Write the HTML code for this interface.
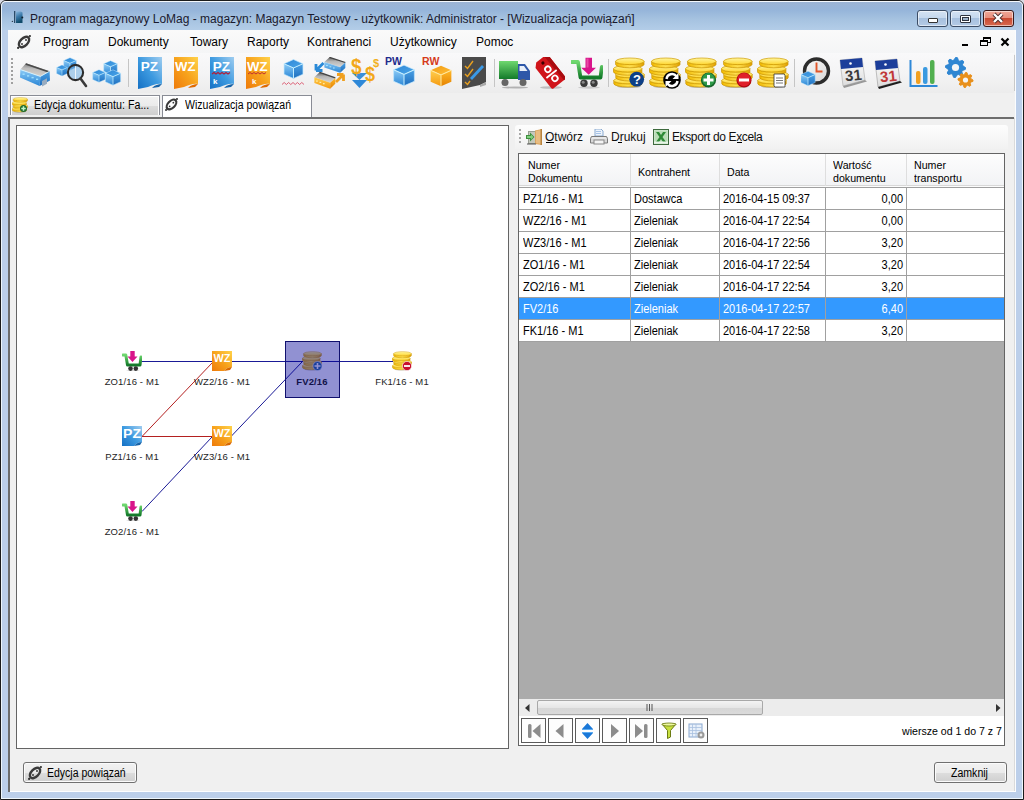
<!DOCTYPE html>
<html><head><meta charset="utf-8">
<style>
*{box-sizing:border-box;margin:0;padding:0}
html,body{width:1024px;height:800px;overflow:hidden;background:#d8dae4}
body{position:relative;font-family:"Liberation Sans",sans-serif;color:#000}
.a{position:absolute}
svg{display:block}
#win{left:0;top:0;width:1024px;height:800px;background:#bccfea;border:1px solid #1b1b1b;border-radius:6px 6px 0 0;box-shadow:inset 0 0 0 1px #eef6fc}
#titlebg{left:1px;top:1px;width:1022px;height:29px;border-radius:5px 5px 0 0;border-top:1px solid #f4f8fc;border-left:1px solid #eaf2fa;border-right:1px solid #eaf2fa;background:linear-gradient(#9cb4d4 0,#96b5da 30%,#a5c2e0 60%,#b3cde8 100%)}
#client{left:8px;top:30px;width:1008px;height:762px;background:#f0f0f0}
.t{white-space:nowrap;font-size:12px;line-height:14px}
.s{white-space:nowrap;font-size:11px;line-height:13px}
.hd{font-size:11.5px;line-height:13px;transform:scaleX(.925);transform-origin:0 0}
.gl{font-size:9.5px;letter-spacing:.12px;line-height:11px;text-align:center;white-space:nowrap;color:#1e1e1e}
.rc{font-size:12px;line-height:14px;transform:scaleX(.917);transform-origin:0 0}
.rr{transform-origin:100% 0}
.cap{top:10px;width:31px;height:17px;border:1px solid #3c4d66;border-radius:3px;box-shadow:inset 0 0 0 1px rgba(255,255,255,.55)}
</style></head><body>
<svg width="0" height="0" style="position:absolute">
<defs>
<linearGradient id="gBlue" x1="1" y1="0" x2="0" y2="1"><stop offset="0" stop-color="#9fcdf0"/><stop offset="0.5" stop-color="#3d9ae0"/><stop offset="1" stop-color="#1470c4"/></linearGradient>
<linearGradient id="gOrange" x1="1" y1="0" x2="0" y2="1"><stop offset="0" stop-color="#ffd24a"/><stop offset="0.5" stop-color="#f7a21c"/><stop offset="1" stop-color="#ee7a0a"/></linearGradient>
<linearGradient id="gCoin" x1="0" y1="0" x2="0" y2="1"><stop offset="0" stop-color="#fff7a0"/><stop offset="1" stop-color="#ffd632"/></linearGradient><linearGradient id="gCoinS" x1="0" y1="0" x2="1" y2="0"><stop offset="0" stop-color="#f0b800"/><stop offset="0.5" stop-color="#ffe050"/><stop offset="1" stop-color="#e0a000"/></linearGradient>
<linearGradient id="gGreen" x1="0" y1="0" x2="0" y2="1"><stop offset="0" stop-color="#6fd86f"/><stop offset="1" stop-color="#137a2a"/></linearGradient>
<symbol id="docPZ" viewBox="0 0 24 32"><path d="M0 0h24v27c-4-1-9 1-14 3L0 32z" fill="url(#gBlue)"/><path d="M14 31c3-3 6-4 10-4l-3 3z" fill="#1763a8"/><text x="11.5" y="13.5" font-family="Liberation Sans" font-weight="700" font-size="13.5" fill="#fff" text-anchor="middle">PZ</text></symbol>
<symbol id="docWZ" viewBox="0 0 24 32"><path d="M0 0h24v27c-4-1-9 1-14 3L0 32z" fill="url(#gOrange)"/><path d="M14 31c3-3 6-4 10-4l-3 3z" fill="#e06a00"/><text x="11.3" y="13.5" font-family="Liberation Sans" font-weight="700" font-size="13.5" fill="#fff" text-anchor="middle" textLength="20.5" lengthAdjust="spacingAndGlyphs">WZ</text></symbol>
<symbol id="gWZ" viewBox="0 0 20 20"><path d="M0 0h20v16c-3 0-6 1.5-8 4H0z" fill="url(#gOrange)"/><path d="M12 20c2-2.5 5-4 8-4l-2 3z" fill="#d86800"/><text x="10" y="11" font-family="Liberation Sans" font-weight="700" font-size="11.5" fill="#fff" text-anchor="middle" textLength="17" lengthAdjust="spacingAndGlyphs">WZ</text></symbol><symbol id="gPZ" viewBox="0 0 20 20"><path d="M0 0h20v16c-3 0-6 1.5-8 4H0z" fill="url(#gBlue)"/><path d="M12 20c2-2.5 5-4 8-4l-2 3z" fill="#1763a8"/><text x="10" y="11.5" font-family="Liberation Sans" font-weight="700" font-size="13" fill="#fff" text-anchor="middle" textLength="18" lengthAdjust="spacingAndGlyphs">PZ</text></symbol>
<symbol id="link" viewBox="0 0 14 14"><ellipse cx="7" cy="7" rx="6.3" ry="3.7" transform="rotate(-45 7 7)" fill="none" stroke="#3a3a3a" stroke-width="2.4"/><circle cx="12.9" cy="1.1" r="1.1" fill="#333"/><circle cx="1.1" cy="12.9" r="1.1" fill="#333"/><circle cx="9" cy="5" r=".95" fill="#333"/><circle cx="5" cy="9" r=".95" fill="#333"/></symbol>
<symbol id="cartS" viewBox="0 0 20 20"><path d="M0.8 4h3l1.7 10h12.5l1-8" fill="none" stroke="url(#gGreen)" stroke-width="3" stroke-linejoin="round" stroke-linecap="round"/><path d="M8.3 0h4.4v5.5h2.8l-5 5.5-5-5.5h2.8z" fill="#d8148a"/><circle cx="8.5" cy="17.6" r="2.3" fill="#333"/><circle cx="13.8" cy="17.6" r="2.3" fill="#333"/><ellipse cx="11" cy="19.6" rx="7" ry=".6" fill="#000" opacity=".15"/></symbol>
<symbol id="cart" viewBox="0 0 32 32"><ellipse cx="18" cy="30.5" rx="11" ry="1.2" fill="#000" opacity=".15"/><path d="M0.5 5h6.5l2.5 15.5h20l1.3-10.5" fill="none" stroke="url(#gGreen)" stroke-width="3.8" stroke-linejoin="round" stroke-linecap="round"/><path d="M14.5 0.7h6.5v10h4l-7.3 7-7.5-7h4.3z" fill="#d8148a"/><path d="M15.5 1.5h2v9h-2z" fill="#f060b0" opacity=".7"/><circle cx="13" cy="26.3" r="3.7" fill="#3a3a3a"/><circle cx="23" cy="26.3" r="3.7" fill="#3a3a3a"/><circle cx="12.2" cy="25.3" r="1.5" fill="#888"/><circle cx="22.2" cy="25.3" r="1.5" fill="#888"/></symbol>
<symbol id="coins" viewBox="0 0 32 32"><ellipse cx="16" cy="29.5" rx="12" ry="1.6" fill="#000" opacity=".2"/><path d="M0.8000000000000007 23.5A14.2 3.3 0 0 0 29.2 23.5V26.7A14.2 3.3 0 0 1 0.8000000000000007 26.7Z" fill="url(#gCoinS)" stroke="#c89200" stroke-width=".7"/><ellipse cx="15" cy="23.5" rx="14.2" ry="3.3" fill="url(#gCoin)" stroke="#d09c00" stroke-width=".7"/><path d="M2.8000000000000007 17.5A14.2 3.3 0 0 0 31.2 17.5V20.7A14.2 3.3 0 0 1 2.8000000000000007 20.7Z" fill="url(#gCoinS)" stroke="#c89200" stroke-width=".7"/><ellipse cx="17" cy="17.5" rx="14.2" ry="3.3" fill="url(#gCoin)" stroke="#d09c00" stroke-width=".7"/><path d="M0.5 11.7A14.2 3.3 0 0 0 28.9 11.7V14.899999999999999A14.2 3.3 0 0 1 0.5 14.899999999999999Z" fill="url(#gCoinS)" stroke="#c89200" stroke-width=".7"/><ellipse cx="14.7" cy="11.7" rx="14.2" ry="3.3" fill="url(#gCoin)" stroke="#d09c00" stroke-width=".7"/><path d="M2.6000000000000014 4.3A14.2 3.3 0 0 0 31.0 4.3V7.5A14.2 3.3 0 0 1 2.6000000000000014 7.5Z" fill="url(#gCoinS)" stroke="#c89200" stroke-width=".7"/><ellipse cx="16.8" cy="4.3" rx="14.2" ry="3.3" fill="url(#gCoin)" stroke="#d09c00" stroke-width=".7"/></symbol>
</defs></svg>

<div id="win" class="a"></div>
<div id="titlebg" class="a"></div>
<!-- title icon -->
<svg class="a" style="left:11px;top:10px" width="14" height="14" viewBox="0 0 14 14"><defs><linearGradient id="tiG" x1="0" y1="0" x2="0.3" y2="1"><stop offset="0" stop-color="#8ab8e0"/><stop offset=".5" stop-color="#3a78a8"/><stop offset="1" stop-color="#0e4a6a"/></linearGradient></defs><rect x="3" y="1" width="1.3" height="12" fill="#2a4a68"/><path d="M5 1.5h5l1.5 1v10.5H5z" fill="url(#tiG)"/><circle cx="11.3" cy="7.6" r="1" fill="#102030"/><circle cx="1.4" cy="11.4" r=".7" fill="#304050"/></svg>
<div class="a t" style="left:30px;top:12px;color:#1a1a2e">Program magazynowy LoMag - magazyn: Magazyn Testowy - użytkownik: Administrator - [Wizualizacja powiązań]</div>
<!-- caption buttons -->
<div class="a cap" style="left:917px;background:linear-gradient(#d4e2f2 0,#c5d8ee 45%,#a7c0de 50%,#b4cbe6 100%)"></div>
<div class="a" style="left:928px;top:18px;width:10px;height:5px;border:1px solid #333;background:#fff;border-radius:1px"></div>
<div class="a cap" style="left:950px;background:linear-gradient(#d4e2f2 0,#c5d8ee 45%,#a7c0de 50%,#b4cbe6 100%)"></div>
<div class="a" style="left:960px;top:15px;width:11px;height:8px;border:1px solid #2e3440;background:#fff;border-radius:1px"></div><div class="a" style="left:962px;top:17px;width:7px;height:4px;border:1px solid #2e3440;background:#9fb4cc"></div>
<div class="a cap" style="left:983px;border-color:#3a1a1a;background:linear-gradient(#f0a898 0,#e8907e 45%,#c94a32 50%,#d86a50 100%)"></div>
<div class="a" style="left:991px;top:12px"><svg width="14" height="12"><path d="M3 2L11 10M11 2L3 10" stroke="#4a2a2a" stroke-width="4"/><path d="M3 2L11 10M11 2L3 10" stroke="#fff" stroke-width="2.4"/></svg></div>

<div id="client" class="a"></div>

<!-- menubar -->
<div class="a" style="left:8px;top:30px;width:1008px;height:24px;background:linear-gradient(#fafafa,#f4f5f6)"></div>
<svg class="a" style="left:17px;top:35px" width="14" height="14"><use href="#link"/></svg>
<div class="a t" style="left:43px;top:35px">Program</div>
<div class="a t" style="left:108px;top:35px">Dokumenty</div>
<div class="a t" style="left:190px;top:35px">Towary</div>
<div class="a t" style="left:247px;top:35px">Raporty</div>
<div class="a t" style="left:307px;top:35px">Kontrahenci</div>
<div class="a t" style="left:390px;top:35px">Użytkownicy</div>
<div class="a t" style="left:476px;top:35px">Pomoc</div>
<!-- mdi buttons -->
<div class="a" style="left:962px;top:44px;width:6px;height:2px;background:#000"></div>
<div class="a" style="left:983px;top:37px;width:8px;height:6px;border:1px solid #000;border-top-width:2px"></div>
<div class="a" style="left:980px;top:40px;width:8px;height:6px;border:1px solid #000;border-top-width:2px;background:#f5f6f8"></div>
<div class="a" style="left:1000px;top:37px"><svg width="10" height="10"><path d="M1.5 1.5L8.5 8.5M8.5 1.5L1.5 8.5" stroke="#000" stroke-width="2.2"/></svg></div>

<!-- toolbar -->
<div class="a" style="left:8px;top:53px;width:1006px;height:40px;background:linear-gradient(#f9f9fa,#f4f4f5 50%,#ececec)"></div><div class="a" style="left:1014px;top:55px;width:1px;height:36px;background:#c8c8c8"></div>
<div class="a" style="left:11px;top:58px;width:2px;height:27px;background:repeating-linear-gradient(#a0a0a0 0 2px,transparent 2px 4px)"></div>
<div id="tb"></div><svg width="0" height="0" style="position:absolute"><defs>
<linearGradient id="cTop" x1="0" y1="0" x2="1" y2="1"><stop offset="0" stop-color="#2f86d4"/><stop offset="1" stop-color="#4aa6ea"/></linearGradient>
<linearGradient id="cL" x1="0" y1="0" x2="0" y2="1"><stop offset="0" stop-color="#8ccbf6"/><stop offset="1" stop-color="#2a86d6"/></linearGradient>
<linearGradient id="cR" x1="0" y1="0" x2="0" y2="1"><stop offset="0" stop-color="#4aa0e4"/><stop offset="1" stop-color="#1f6fbf"/></linearGradient>
<linearGradient id="oTop" x1="0" y1="0" x2="1" y2="1"><stop offset="0" stop-color="#f29a10"/><stop offset="1" stop-color="#ffbf3a"/></linearGradient>
<linearGradient id="oL" x1="0" y1="0" x2="0" y2="1"><stop offset="0" stop-color="#ffcf50"/><stop offset="1" stop-color="#f59a10"/></linearGradient>
<linearGradient id="oR" x1="0" y1="0" x2="0" y2="1"><stop offset="0" stop-color="#ffb82a"/><stop offset="1" stop-color="#e58300"/></linearGradient>
<linearGradient id="roofW" x1="0.6" y1="0" x2="0.4" y2="1"><stop offset="0" stop-color="#6a6a6a"/><stop offset="0.45" stop-color="#bdbdbd"/><stop offset="1" stop-color="#d9d2ca"/></linearGradient>
<linearGradient id="roof" x1="0" y1="0" x2="0" y2="1"><stop offset="0" stop-color="#5a5a5a"/><stop offset="0.4" stop-color="#b5b5b5"/><stop offset="1" stop-color="#d8d8d8"/></linearGradient>
<symbol id="cubeB" viewBox="0 0 20 20"><path d="M10 1L19 5L10 9L1 5z" fill="url(#cTop)"/><path d="M1 5L10 9V19L1 15z" fill="url(#cL)"/><path d="M10 9L19 5V15L10 19z" fill="url(#cR)"/><path d="M1 5L10 9L19 5M10 9V19" stroke="#c8f0ff" stroke-width=".9" fill="none"/><path d="M10 1L19 5V15L10 19L1 15V5z" stroke="#bfe8ff" stroke-width=".6" fill="none"/></symbol>
<symbol id="cubeO" viewBox="0 0 20 20"><path d="M10 1L19 5L10 9L1 5z" fill="url(#oTop)"/><path d="M1 5L10 9V19L1 15z" fill="url(#oL)"/><path d="M10 9L19 5V15L10 19z" fill="url(#oR)"/><path d="M1 5L10 9L19 5M10 9V19" stroke="#ffe9a0" stroke-width=".9" fill="none"/></symbol>
<symbol id="house" viewBox="0 0 32 26"><path d="M0.4 8.6L6 2.2L29.6 10.2L20.4 15.4z" fill="url(#roofW)"/><path d="M6 2.2L29.6 10.2L28 11.5L5.5 3.8z" fill="#4a4a4a"/><path d="M0.4 8.6L20.4 15.4L19.6 25L0 16.6z" fill="url(#cL)"/><path d="M20.4 15.4L29.6 10.2L30 19.5L19.6 25z" fill="url(#cR)"/><path d="M0.4 8.6L20.4 15.4L29.6 10.2" stroke="#d8f4ff" stroke-width=".9" fill="none"/><g fill="#9fe0ff"><rect x="2.5" y="12.5" width="2.2" height="1.4"/><rect x="7" y="14.2" width="2.2" height="1.4"/><rect x="11.5" y="15.9" width="2.2" height="1.4"/><rect x="16" y="17.6" width="2.2" height="1.4"/></g><path d="M22 20l5-2.8v5.5l-5 2.8z" fill="#98acc0"/></symbol>
</defs></svg>
<!-- 1 warehouse -->
<svg class="a" style="left:20px;top:61px" width="32" height="26" viewBox="0 0 32 26"><use href="#house"/></svg>
<!-- 2 search -->
<svg class="a" style="left:56px;top:57px" width="32" height="32" viewBox="0 0 32 32"><use href="#cubeB" x="6" y="0" width="16" height="14"/><use href="#cubeB" x="0" y="7" width="12" height="13"/><circle cx="19.5" cy="15.5" r="7.6" fill="#7db7e6" opacity=".6"/><path d="M19.5 8.5v14" stroke="#fff" stroke-width=".8"/><circle cx="19.5" cy="15.5" r="7.6" fill="none" stroke="#2d2d2d" stroke-width="2.1"/><path d="M24.5 21.5L30 29" stroke="#3a3a3a" stroke-width="2.6" stroke-linecap="round"/></svg>
<!-- 3 boxes -->
<svg class="a" style="left:92px;top:60px" width="32" height="28" viewBox="0 0 32 28"><use href="#cubeB" x="10" y="0" width="17" height="15"/><use href="#cubeB" x="0" y="9" width="14" height="14"/><use href="#cubeB" x="12" y="9" width="18" height="17"/></svg>
<div class="a" style="left:128px;top:59px;width:1px;height:28px;background:#c5c5c5"></div>
<!-- 4 PZ -->
<svg class="a" style="left:138px;top:57px" width="24" height="32"><use href="#docPZ"/></svg>
<!-- 5 WZ -->
<svg class="a" style="left:174px;top:57px" width="24" height="32"><use href="#docWZ"/></svg>
<!-- 6 PZk -->
<svg class="a" style="left:210px;top:57px" width="24" height="32"><use href="#docPZ"/><path d="M2 17l2-1.5 2 1.5 2-1.5 2 1.5 2-1.5 2 1.5 2-1.5 2 1.5 2-1.5" stroke="#b0203a" stroke-width="1.2" fill="none"/><text x="3" y="27" font-family="Liberation Sans" font-weight="700" font-size="8" fill="#fff">k</text></svg>
<!-- 7 WZk -->
<svg class="a" style="left:246px;top:57px" width="24" height="32"><use href="#docWZ"/><path d="M2 17l2-1.5 2 1.5 2-1.5 2 1.5 2-1.5 2 1.5 2-1.5 2 1.5 2-1.5" stroke="#c03030" stroke-width="1" fill="none"/><text x="6" y="27" font-family="Liberation Sans" font-weight="700" font-size="8" fill="#fff">k</text></svg>
<!-- 8 cube wave -->
<svg class="a" style="left:282px;top:58px" width="24" height="30" viewBox="0 0 24 30"><use href="#cubeB" x="1" y="0" width="21" height="22"/><path d="M0 26.5l2.2-2 2.2 2 2.2-2 2.2 2 2.2-2 2.2 2 2.2-2 2.2 2 2.2-2 2.2 2" stroke="#d9506a" stroke-width="0.9" fill="none"/></svg>
<!-- 9 exchange -->
<svg class="a" style="left:313px;top:57px" width="34" height="32" viewBox="0 0 34 32"><svg x="11" y="0" width="22" height="16" viewBox="0 0 32 26" preserveAspectRatio="none"><path d="M0.5 8L8 0.5L31 9L23.5 16.5z" fill="url(#roof)"/><path d="M8 0.5L31 9" stroke="#444" stroke-width="2"/><path d="M0.5 8L23.5 16.5V25.5L0.5 17z" fill="url(#cL)"/><path d="M23.5 16.5L31 9V18L23.5 25.5z" fill="url(#cR)"/><g fill="#a8e4ff"><rect x="3" y="13" width="2.5" height="1.8"/><rect x="8" y="15" width="2.5" height="1.8"/><rect x="13" y="17" width="2.5" height="1.8"/></g></svg><svg x="1" y="15" width="22" height="17" viewBox="0 0 32 26" preserveAspectRatio="none"><path d="M0.5 8L8 0.5L31 9L23.5 16.5z" fill="url(#roof)"/><path d="M8 0.5L31 9" stroke="#444" stroke-width="2"/><path d="M0.5 8L23.5 16.5V25.5L0.5 17z" fill="url(#oL)"/><path d="M23.5 16.5L31 9V18L23.5 25.5z" fill="url(#oR)"/><g fill="#fff0b0"><rect x="3" y="13" width="2.5" height="1.8"/><rect x="8" y="15" width="2.5" height="1.8"/><rect x="13" y="17" width="2.5" height="1.8"/></g></svg><path d="M10.5 6L4 12.5M3 13.5h6.5M3 13.5V7" stroke="#2a8ad8" stroke-width="2.8" fill="none"/><path d="M23 25L29.5 18.5M30.5 17.5h-6.5M30.5 17.5v6.5" stroke="#f0a020" stroke-width="2.8" fill="none"/></svg>
<!-- 10 $$$ -->
<svg class="a" style="left:351px;top:57px" width="30" height="32" viewBox="0 0 30 32"><path d="M1 16h15l-7.5 7z" fill="#3a90d8"/><path d="M1 23h15l-7.5 8z" fill="#2e88d8"/><text x="0" y="15" font-family="Liberation Sans" font-weight="700" font-size="19" fill="#f2a81a" transform="scale(1,1.12)">$</text><text x="14" y="21.5" font-family="Liberation Sans" font-weight="700" font-size="18" fill="#f2a81a" transform="scale(1,1.12)">$</text><text x="22" y="9.5" font-family="Liberation Sans" font-weight="700" font-size="11" fill="#f2b020">$</text></svg>
<!-- 11 PW -->
<svg class="a" style="left:385px;top:57px" width="32" height="32" viewBox="0 0 32 32"><text x="0" y="7.5" font-family="Liberation Sans" font-weight="700" font-size="10.5" fill="#1e2c8c">PW</text><use href="#cubeB" x="7.5" y="7" width="23" height="23"/></svg>
<!-- 12 RW -->
<svg class="a" style="left:421px;top:57px" width="32" height="32" viewBox="0 0 32 32"><text x="1" y="7.5" font-family="Liberation Sans" font-weight="700" font-size="10.5" fill="#d63a1a">RW</text><use href="#cubeO" x="8.5" y="7.5" width="23" height="23"/></svg>
<!-- 13 checklist -->
<svg class="a" style="left:462px;top:57px" width="24" height="32" viewBox="0 0 24 32"><path d="M0 0h24v25l-6 3-18 4z" fill="#4a4a4a"/><path d="M18 28l6-3v3l-6 2z" fill="#aaa"/><path d="M3 9l2.5 2.5L11 4M3 17l2.5 2.5L11 12M3 25l2.5 2.5L8 24" stroke="#e8a020" stroke-width="1.4" fill="none"/><path d="M9 22L21 9" stroke="#3a9ae8" stroke-width="2.8"/></svg>
<div class="a" style="left:494px;top:59px;width:1px;height:28px;background:#c5c5c5"></div>
<!-- 14 truck -->
<svg class="a" style="left:499px;top:61px" width="32" height="28" viewBox="0 0 32 28"><rect x="0" y="0" width="19" height="18" fill="url(#gGreen)"/><path d="M19 3h7l5 7v9H19z" fill="#2e57a8"/><path d="M20.5 5h4.5l3.5 5h-8z" fill="#e8eef8"/><circle cx="6" cy="21.5" r="3.5" fill="#666"/><circle cx="24" cy="21.5" r="3.5" fill="#666"/><ellipse cx="16" cy="26.5" rx="13" ry="1" fill="#000" opacity=".25"/></svg>
<!-- 15 tag -->
<svg class="a" style="left:535px;top:57px" width="30" height="32" viewBox="0 0 30 32"><ellipse cx="16" cy="30.5" rx="11" ry="1.3" fill="#000" opacity=".2"/><g transform="rotate(-38 15 15)"><path d="M6 3l4-4h10l4 4v25a2 2 0 0 1-2 2H8a2 2 0 0 1-2-2z" fill="#d0141a"/><path d="M20 -1l4 4v25a2 2 0 0 1-2 2h-1z" fill="#a80c10"/><circle cx="15" cy="3.5" r="1.6" fill="#3a0000"/><circle cx="15" cy="11.5" r="2.8" fill="none" stroke="#fff" stroke-width="1.8"/><circle cx="15" cy="23" r="2.8" fill="none" stroke="#fff" stroke-width="1.8"/><path d="M8.5 17.5h13" stroke="#fff" stroke-width="1.8"/></g></svg>
<!-- 16 cart -->
<svg class="a" style="left:571px;top:57px" width="32" height="32"><use href="#cart"/></svg>
<div class="a" style="left:608px;top:59px;width:1px;height:28px;background:#c5c5c5"></div>
<!-- 17-21 coins -->
<svg class="a" style="left:613px;top:57px" width="32" height="32"><use href="#coins"/><circle cx="23.7" cy="22.2" r="7.4" fill="#0d3f86"/><text x="23.9" y="27" font-family="Liberation Sans" font-weight="700" font-size="13" fill="#fff" text-anchor="middle">?</text></svg>
<svg class="a" style="left:649px;top:57px" width="32" height="32"><use href="#coins"/><circle cx="23" cy="23" r="8.8" fill="#000"/><path d="M17.5 22a5.6 5.6 0 0 1 10-2.8M28.5 24a5.6 5.6 0 0 1-10 2.8" stroke="#fff" stroke-width="2.4" fill="none"/><path d="M29.5 16v6h-6zM16.5 30v-6h6z" fill="#fff"/></svg>
<svg class="a" style="left:685px;top:57px" width="32" height="32"><use href="#coins"/><circle cx="23.5" cy="23" r="7.6" fill="#16652a"/><circle cx="23.5" cy="22.5" r="6.4" fill="#2e9a48"/><path d="M23.5 18v10M18.5 23h10" stroke="#fff" stroke-width="3"/></svg>
<svg class="a" style="left:721px;top:57px" width="32" height="32"><use href="#coins"/><circle cx="23" cy="23" r="7.6" fill="#b00a14"/><circle cx="23" cy="22.6" r="6.6" fill="#e0202a"/><path d="M18 23h10" stroke="#fff" stroke-width="3"/></svg>
<svg class="a" style="left:757px;top:57px" width="32" height="32"><use href="#coins"/><path d="M17 17h10l1 1v12h-10l-1-1z" fill="#fff" stroke="#333" stroke-width=".8"/><path d="M19 21h7M19 23.5h7M19 26h7" stroke="#555" stroke-width=".8"/></svg>
<div class="a" style="left:794px;top:59px;width:1px;height:28px;background:#c5c5c5"></div>
<!-- 22 clock -->
<svg class="a" style="left:801px;top:57px" width="32" height="32" viewBox="0 0 32 32"><defs><linearGradient id="clkF" x1="0" y1="0" x2="1" y2="1"><stop offset="0" stop-color="#fafafa"/><stop offset="1" stop-color="#d6d6d6"/></linearGradient></defs><circle cx="15.5" cy="14" r="12" fill="url(#clkF)" stroke="#2c2c2c" stroke-width="3.4"/><path d="M15.5 5.5v9h6" stroke="#e0562a" stroke-width="1.9" fill="none"/><use href="#cubeB" x="-1" y="13" width="16" height="17"/></svg>
<!-- 23 cal1 -->
<svg class="a" style="left:838px;top:57px" width="32" height="32" viewBox="0 0 32 32"><defs><linearGradient id="calP" x1="0" y1="0" x2="0" y2="1"><stop offset="0" stop-color="#ffffff"/><stop offset="1" stop-color="#dcdcdc"/></linearGradient></defs><path d="M2 3l22-2 3 22-22 6z" fill="url(#calP)" stroke="#aaa" stroke-width=".6"/><path d="M2 3l22-2 1 9L3 12z" fill="#1c3e9a"/><circle cx="12.5" cy="6.5" r="1.3" fill="#fff"/><text x="7" y="23.5" font-family="Liberation Sans" font-weight="700" font-size="15" fill="#3a3a3a" transform="rotate(-6 15 18)">31</text><path d="M5 29l22-6 2 1.5L6 31z" fill="#999"/></svg>
<!-- 24 cal2 -->
<svg class="a" style="left:873px;top:57px" width="32" height="32" viewBox="0 0 32 32"><path d="M2 4l22-2 3 22-22 6z" fill="url(#calP)" stroke="#999" stroke-width=".6"/><path d="M2 4l22-2 1 9L3 13z" fill="#1c3e9a"/><circle cx="12.5" cy="7.5" r="1.3" fill="#fff"/><text x="7" y="24.5" font-family="Liberation Sans" font-weight="700" font-size="15" fill="#c03838" transform="rotate(-6 15 19)">31</text><path d="M5 30l22-6 2 1.5L6 32z" fill="#1e1e1e"/></svg>
<!-- 25 chart -->
<svg class="a" style="left:909px;top:57px" width="30" height="32" viewBox="0 0 30 32"><path d="M1.5 3v26h27" stroke="#2e88d8" stroke-width="2" fill="none"/><rect x="7" y="14" width="4.5" height="13" rx="2" fill="#f2a020"/><rect x="14" y="10" width="4.5" height="17" rx="2" fill="#3a9ae0"/><rect x="21" y="3" width="4.5" height="24" rx="2" fill="#52b050"/></svg>
<!-- 26 gears -->
<svg class="a" style="left:945px;top:57px" width="30" height="32" viewBox="0 0 30 32"><polygon points="10.50,0.50 12.45,0.69 13.41,3.48 14.72,4.18 17.57,3.43 18.81,4.94 17.52,7.59 17.95,9.02 20.50,10.50 20.31,12.45 17.52,13.41 16.82,14.72 17.57,17.57 16.06,18.81 13.41,17.52 11.98,17.95 10.50,20.50 8.55,20.31 7.59,17.52 6.28,16.82 3.43,17.57 2.19,16.06 3.48,13.41 3.05,11.98 0.50,10.50 0.69,8.55 3.48,7.59 4.18,6.28 3.43,3.43 4.94,2.19 7.59,3.48 9.02,3.05" fill="#2f86d2" stroke="#2f86d2" stroke-width="1" stroke-linejoin="round"/><circle cx="10.5" cy="10.5" r="3.6" fill="#f4f5f6"/><polygon points="20.50,15.50 21.96,15.64 22.64,17.83 23.61,18.34 25.80,17.70 26.74,18.83 25.67,20.86 25.99,21.91 28.00,23.00 27.86,24.46 25.67,25.14 25.16,26.11 25.80,28.30 24.67,29.24 22.64,28.17 21.59,28.49 20.50,30.50 19.04,30.36 18.36,28.17 17.39,27.66 15.20,28.30 14.26,27.17 15.33,25.14 15.01,24.09 13.00,23.00 13.14,21.54 15.33,20.86 15.84,19.89 15.20,17.70 16.33,16.76 18.36,17.83 19.41,17.51" fill="#e8901c" stroke="#e8901c" stroke-width="1" stroke-linejoin="round"/><circle cx="20.5" cy="23" r="2.6" fill="#f4f5f6"/></svg>


<!-- tabs -->
<div class="a" style="left:10px;top:95px;width:150px;height:20px;border:1px solid #898c95;border-bottom:none;box-shadow:inset 1px 1px 0 #fff,inset -1px 0 0 #fff;background:linear-gradient(#f2f2f2,#ebebeb 50%,#dddddd 51%,#cfcfcf)"></div>
<svg class="a" style="left:12px;top:97px" width="16" height="16" viewBox="0 0 32 32"><use href="#coins"/><circle cx="23" cy="23" r="7" fill="#1d6a30"/><path d="M23 18.5v9M18.5 23h9" stroke="#bff5c8" stroke-width="3"/></svg>
<div class="a t" style="left:34px;top:98px;font-size:12px;transform:scaleX(.891);transform-origin:0 0">Edycja dokumentu: Fa...</div>
<div class="a" style="left:162px;top:95px;width:150px;height:24px;border:1px solid #898c95;border-bottom:none;background:#fff"></div>
<svg class="a" style="left:165px;top:98px" width="13" height="13"><use href="#link"/></svg>
<div class="a t" style="left:185px;top:98px;font-size:12px;transform:scaleX(.878);transform-origin:0 0">Wizualizacja powiązań</div>
<div class="a" style="left:8px;top:117px;width:1006px;height:2px;background:#6d6d6d"></div>
<div class="a" style="left:8px;top:118px;width:2px;height:674px;background:#6d6d6d"></div>

<div class="a" style="left:1014px;top:118px;width:1px;height:674px;background:#dadada"></div><div class="a" style="left:1015px;top:30px;width:1px;height:762px;background:#fbfdff"></div>
<div class="a" style="left:10px;top:791px;width:1006px;height:1px;background:#fdfeff"></div>
<!-- graph panel -->
<div class="a" style="left:16px;top:125px;width:493px;height:624px;background:#fff;border:1px solid #646464"></div>
<div id="graph"></div>
<svg class="a" style="left:0;top:0" width="520" height="560">
<g stroke-width="1" fill="none">
<path d="M141 361.5H213M231 361.5H303M321 361.5H393" stroke="#1a1a96" shape-rendering="crispEdges"/>
<path d="M142 511.5L212 437M231 436.5L302 362" stroke="#1a1a96"/>
<path d="M142 436.5H213" stroke="#b42020" shape-rendering="crispEdges"/><path d="M142 436.5L213 362" stroke="#b42020"/>
</g></svg>

<svg class="a" style="left:122px;top:351px" width="20" height="20"><use href="#cartS"/></svg>
<svg class="a" style="left:212px;top:351px" width="20" height="20"><use href="#gWZ"/></svg>
<svg class="a" style="left:302px;top:351px" width="20" height="20"><use href="#coins"/><circle cx="15.5" cy="15" r="4.5" fill="#2c6f9e" stroke="#fff" stroke-width=".6"/><path d="M15.5 12v6M12.5 15h6" stroke="#fff" stroke-width="1.6"/></svg>
<svg class="a" style="left:392px;top:351px" width="20" height="20"><use href="#coins"/><circle cx="15" cy="15" r="4.6" fill="#c8102e" stroke="#fff" stroke-width=".6"/><path d="M12 15h6" stroke="#fff" stroke-width="1.8"/></svg>
<svg class="a" style="left:122px;top:426px" width="20" height="20"><use href="#gPZ"/></svg>
<svg class="a" style="left:212px;top:426px" width="20" height="20"><use href="#gWZ"/></svg>
<svg class="a" style="left:122px;top:501px" width="20" height="20"><use href="#cartS"/></svg>
<div class="a" style="left:285px;top:341px;width:55px;height:57px;border:1px solid #10106e;background:rgba(0,0,150,0.43)"></div>
<div class="a gl" style="left:92px;top:376px;width:80px">ZO1/16 - M1</div>
<div class="a gl" style="left:182px;top:376px;width:80px">WZ2/16 - M1</div>
<div class="a gl" style="left:272px;top:376px;width:80px;font-weight:700;color:#12124a">FV2/16</div>
<div class="a gl" style="left:362px;top:376px;width:80px">FK1/16 - M1</div>
<div class="a gl" style="left:92px;top:451px;width:80px">PZ1/16 - M1</div>
<div class="a gl" style="left:182px;top:451px;width:80px">WZ3/16 - M1</div>
<div class="a gl" style="left:92px;top:526px;width:80px">ZO2/16 - M1</div>


<!-- right toolbar -->
<div class="a" style="left:515px;top:125px;width:493px;height:24px;border-radius:3px 3px 0 0;background:linear-gradient(#fdfdfd,#f1f1f1)"></div>
<div class="a" style="left:519px;top:129px;width:2px;height:15px;background:repeating-linear-gradient(#a8a8a8 0 2px,transparent 2px 4px)"></div>
<div id="rtb"></div>
<div class="a" style="left:526px;top:129px"><svg width="17" height="16" viewBox="0 0 17 16">
<rect x="2" y="2" width="8" height="13" fill="#9a9f94"/><rect x="3" y="3" width="7" height="11" fill="#c4c8bd"/>
<path d="M9 1.5L16 0v16l-7-1z" fill="#d9a560"/><path d="M10 2L15.5 1v14l-5.5-1z" fill="#e8bd82"/><rect x="14.5" y="0" width="1.5" height="16" fill="#b8833e"/>
<path d="M0 6h4V3.5l4.5 4.5L4 12.5V10H0z" fill="#3e8f3e"/><path d="M1 7h4V5.5l2.5 2.5L5 10.5V9H1z" fill="#7fcf7f"/>
<rect x="1" y="14.5" width="9" height="1" fill="#555"/></svg></div>
<div class="a t" style="left:545px;top:130px;color:#101010">Otwórz</div>
<div class="a" style="left:546px;top:142px;width:8px;height:1px;background:#000"></div>
<div class="a" style="left:590px;top:129px"><svg width="18" height="16" viewBox="0 0 18 16">
<path d="M5 0h6l2 2v5H5z" fill="#eef4fb" stroke="#8aaad0" stroke-width="1"/><path d="M6 2h5v1H6zM6 4h5v1H6z" fill="#a6c2e6"/>
<path d="M1.5 7.5h15l1 2v4.5h-17v-4.5z" fill="#d8d8d8" stroke="#7a7a7a" stroke-width="1"/>
<rect x="4" y="11" width="10" height="4" fill="#f4f4f4" stroke="#888" stroke-width="1"/><rect x="2" y="8.5" width="14" height="1" fill="#f6f6f6"/></svg></div>
<div class="a t" style="left:611px;top:130px;color:#101010">Drukuj</div>
<div class="a" style="left:618px;top:142px;width:4px;height:1px;background:#000"></div>
<div class="a" style="left:653px;top:129px"><svg width="16" height="16" viewBox="0 0 16 16">
<rect x="0.5" y="0.5" width="15" height="15" fill="#d8ead8" stroke="#3d6a3d"/><rect x="1.5" y="1.5" width="13" height="13" fill="#b9dcb6"/>
<path d="M3 3h3l2 3 2-3h3l-3.5 5L13 13h-3l-2-3-2 3H3l3.5-5z" fill="#2f8a36"/><rect x="1" y="12.5" width="14" height="2" fill="#e9f5e9"/></svg></div>
<div class="a t" style="left:672px;top:130px;color:#101010;letter-spacing:-0.38px">Eksport do Excela</div>
<div class="a" style="left:737px;top:142px;width:5px;height:1px;background:#000"></div>


<!-- grid -->
<div class="a" style="left:518px;top:153px;width:487px;height:593px;background:#ababab;border:1px solid #646464"></div>
<div id="grid"></div>
<div class="a" style="left:519px;top:154px;width:485px;height:32px;background:linear-gradient(#fdfdfd,#f2f3f5)"></div>
<div class="a" style="left:519px;top:185px;width:485px;height:1px;background:#d8d8d8"></div>
<div class="a" style="left:519px;top:186px;width:485px;height:1px;background:#fcfcfc"></div>
<div class="a" style="left:630px;top:154px;width:1px;height:32px;background:#dedede"></div>
<div class="a" style="left:719px;top:154px;width:1px;height:32px;background:#dedede"></div>
<div class="a" style="left:825px;top:154px;width:1px;height:32px;background:#dedede"></div>
<div class="a" style="left:906px;top:154px;width:1px;height:32px;background:#dedede"></div>
<div class="a s hd" style="left:528px;top:159px">Numer<br>Dokumentu</div>
<div class="a s hd" style="left:638px;top:166px">Kontrahent</div>
<div class="a s hd" style="left:727px;top:166px">Data</div>
<div class="a s hd" style="left:833px;top:159px">Wartość<br>dokumentu</div>
<div class="a s hd" style="left:914px;top:159px">Numer<br>transportu</div>
<div class="a" style="left:519px;top:187px;width:485px;height:155px;background:#fff"></div>
<div class="a" style="left:519px;top:187px;width:485px;height:1px;background:#a0a0a0"></div>
<div class="a s rc" style="left:523px;top:192px;color:#000">PZ1/16 - M1</div>
<div class="a s rc" style="left:634px;top:192px;color:#000">Dostawca</div>
<div class="a s rc" style="left:723px;top:192px;color:#000">2016-04-15 09:37</div>
<div class="a s rc rr" style="left:825px;width:78px;text-align:right;top:192px;color:#000">0,00</div>
<div class="a" style="left:519px;top:209px;width:485px;height:1px;background:#a0a0a0"></div>
<div class="a s rc" style="left:523px;top:214px;color:#000">WZ2/16 - M1</div>
<div class="a s rc" style="left:634px;top:214px;color:#000">Zieleniak</div>
<div class="a s rc" style="left:723px;top:214px;color:#000">2016-04-17 22:54</div>
<div class="a s rc rr" style="left:825px;width:78px;text-align:right;top:214px;color:#000">0,00</div>
<div class="a" style="left:519px;top:231px;width:485px;height:1px;background:#a0a0a0"></div>
<div class="a s rc" style="left:523px;top:236px;color:#000">WZ3/16 - M1</div>
<div class="a s rc" style="left:634px;top:236px;color:#000">Zieleniak</div>
<div class="a s rc" style="left:723px;top:236px;color:#000">2016-04-17 22:56</div>
<div class="a s rc rr" style="left:825px;width:78px;text-align:right;top:236px;color:#000">3,20</div>
<div class="a" style="left:519px;top:253px;width:485px;height:1px;background:#a0a0a0"></div>
<div class="a s rc" style="left:523px;top:258px;color:#000">ZO1/16 - M1</div>
<div class="a s rc" style="left:634px;top:258px;color:#000">Zieleniak</div>
<div class="a s rc" style="left:723px;top:258px;color:#000">2016-04-17 22:54</div>
<div class="a s rc rr" style="left:825px;width:78px;text-align:right;top:258px;color:#000">3,20</div>
<div class="a" style="left:519px;top:275px;width:485px;height:1px;background:#a0a0a0"></div>
<div class="a s rc" style="left:523px;top:280px;color:#000">ZO2/16 - M1</div>
<div class="a s rc" style="left:634px;top:280px;color:#000">Zieleniak</div>
<div class="a s rc" style="left:723px;top:280px;color:#000">2016-04-17 22:54</div>
<div class="a s rc rr" style="left:825px;width:78px;text-align:right;top:280px;color:#000">3,20</div>
<div class="a" style="left:519px;top:297px;width:485px;height:1px;background:#a0a0a0"></div>
<div class="a" style="left:519px;top:298px;width:485px;height:21px;background:#3399ff"></div>
<div class="a s rc" style="left:523px;top:302px;color:#fff">FV2/16</div>
<div class="a s rc" style="left:634px;top:302px;color:#fff">Zieleniak</div>
<div class="a s rc" style="left:723px;top:302px;color:#fff">2016-04-17 22:57</div>
<div class="a s rc rr" style="left:825px;width:78px;text-align:right;top:302px;color:#fff">6,40</div>
<div class="a" style="left:519px;top:319px;width:485px;height:1px;background:#a0a0a0"></div>
<div class="a s rc" style="left:523px;top:324px;color:#000">FK1/16 - M1</div>
<div class="a s rc" style="left:634px;top:324px;color:#000">Zieleniak</div>
<div class="a s rc" style="left:723px;top:324px;color:#000">2016-04-17 22:58</div>
<div class="a s rc rr" style="left:825px;width:78px;text-align:right;top:324px;color:#000">3,20</div>
<div class="a" style="left:519px;top:341px;width:485px;height:1px;background:#a0a0a0"></div>
<div class="a" style="left:630px;top:187px;width:1px;height:155px;background:#a0a0a0"></div>
<div class="a" style="left:719px;top:187px;width:1px;height:155px;background:#a0a0a0"></div>
<div class="a" style="left:825px;top:187px;width:1px;height:155px;background:#a0a0a0"></div>
<div class="a" style="left:906px;top:187px;width:1px;height:155px;background:#a0a0a0"></div>
<div class="a" style="left:519px;top:699px;width:485px;height:17px;background:#ececec"></div>
<div class="a" style="left:537px;top:700px;width:226px;height:15px;border:1px solid #a8a8a8;border-radius:2px;background:linear-gradient(#f3f3f3,#e6e6e6 50%,#d6d6d6 51%,#dadada)"></div>
<div class="a" style="left:646px;top:704px"><svg width="8" height="7"><path d="M1 0v7M3.5 0v7M6 0v7" stroke="#555" stroke-width="1"/></svg></div>
<div class="a" style="left:525px;top:704px"><svg width="5" height="8"><path d="M4.5 0v8L0 4z" fill="#333"/></svg></div>
<div class="a" style="left:996px;top:704px"><svg width="5" height="8"><path d="M0 0v8L4.5 4z" fill="#333"/></svg></div>
<div class="a" style="left:519px;top:716px;width:485px;height:29px;background:#fff"></div>
<div class="a" style="left:521px;top:718px;width:25px;height:25px;border:1px solid #5a5a5a;background:#fdfdfd"></div>
<div class="a" style="left:548px;top:718px;width:25px;height:25px;border:1px solid #5a5a5a;background:#fdfdfd"></div>
<div class="a" style="left:575px;top:718px;width:25px;height:25px;border:1px solid #5a5a5a;background:#fdfdfd"></div>
<div class="a" style="left:602px;top:718px;width:25px;height:25px;border:1px solid #5a5a5a;background:#fdfdfd"></div>
<div class="a" style="left:629px;top:718px;width:25px;height:25px;border:1px solid #5a5a5a;background:#fdfdfd"></div>
<div class="a" style="left:656px;top:718px;width:25px;height:25px;border:1px solid #5a5a5a;background:#fdfdfd"></div>
<div class="a" style="left:683px;top:718px;width:25px;height:25px;border:1px solid #5a5a5a;background:#fdfdfd"></div>

<svg class="a" style="left:521px;top:718px" width="200" height="25">
<g fill="#8c8c8c"><rect x="7" y="6" width="3.5" height="14" rx="1.5"/><path d="M19.5 6v14l-8-7z"/>
<path d="M42.5 6v14l-8-7z"/>
<path d="M90 6v14l8-7z"/>
<path d="M114 6v14l8-7z"/><rect x="123" y="6" width="3.5" height="14" rx="1.5"/></g>
<path d="M66.5 5l5.5 6h-11zM66.5 21l5.5-6h-11z" fill="#1a78d8"/><path d="M61 11h11v1H61zM61 15h11v-1H61z" fill="#5aaaf0"/>
<path d="M141 6h14l-5.5 6.5v6.5l-3 1.5v-8z" fill="#c8e040" stroke="#6a7a10" stroke-width="1"/><ellipse cx="148" cy="6.5" rx="7" ry="1.5" fill="#eef8a0" stroke="#6a7a10" stroke-width=".8"/>
<rect x="168" y="6" width="13" height="13" fill="#e8f0fa" stroke="#8aa8d0"/><path d="M168 9.5h13M168 12.5h13M168 15.5h13M171.5 6v13M175 6v13" stroke="#a8c0e0" stroke-width=".8"/><circle cx="180" cy="17" r="3.5" fill="#9a9a9a"/><circle cx="180" cy="17" r="1.4" fill="#eee"/>
</svg>
<div class="a s" style="left:902px;top:725px;font-size:11.5px;transform:scaleX(.92);transform-origin:0 0">wiersze od 1 do 7 z 7</div>

<!-- buttons -->
<div class="a" style="left:23px;top:762px;width:114px;height:21px;border:1px solid #707070;border-radius:3px;box-shadow:inset 0 0 0 1px #fbfbfb;background:linear-gradient(#f2f2f2,#ebebeb 50%,#dddddd 51%,#cfcfcf)"></div>
<svg class="a" style="left:28px;top:766px" width="14" height="14"><use href="#link"/></svg>
<div class="a s" style="left:47px;top:766px;font-size:12px;line-height:14px;transform:scaleX(.874);transform-origin:0 0">Edycja powiązań</div>
<div class="a" style="left:934px;top:762px;width:73px;height:21px;border:1px solid #707070;border-radius:3px;box-shadow:inset 0 0 0 1px #fbfbfb;background:linear-gradient(#f2f2f2,#ebebeb 50%,#dddddd 51%,#cfcfcf)"></div>
<div class="a s" style="left:951px;top:766px;font-size:12px;line-height:14px;transform:scaleX(.88);transform-origin:0 0">Zamknij</div>
</body></html>
